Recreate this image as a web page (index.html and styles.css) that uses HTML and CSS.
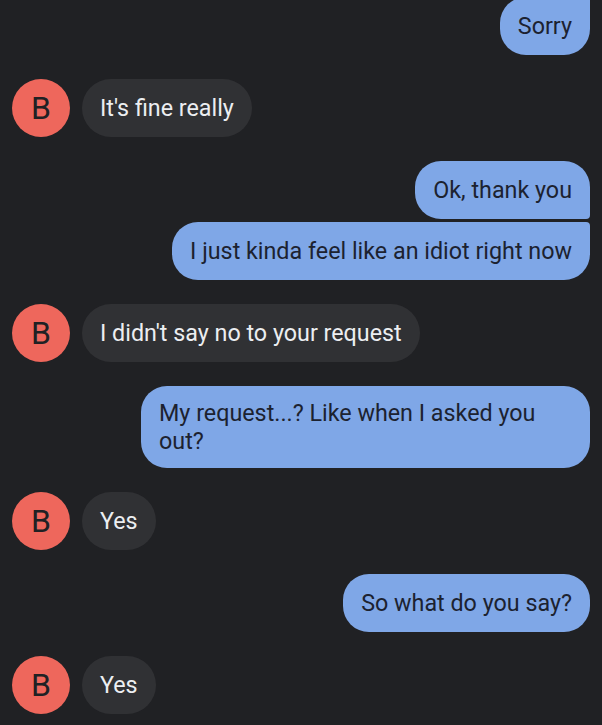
FILE: index.html
```html
<!doctype html>
<html lang="en">
<head>
    <meta charset="utf-8">
    <title>Messages</title>
    <link rel="stylesheet" href="styles.css">
</head>
<body>
<div class="chat">
    <div class="group sent">
        <div class="bubble first-cut">Sorry</div>
    </div>

    <div class="group received">
        <div class="avatar">B</div>
        <div class="bubble">It's fine really</div>
    </div>

    <div class="group sent">
        <div class="bubble top">Ok, thank you</div>
        <div class="bubble bottom">I just kinda feel like an idiot right now</div>
    </div>

    <div class="group received">
        <div class="avatar">B</div>
        <div class="bubble">I didn't say no to your request</div>
    </div>

    <div class="group sent">
        <div class="bubble">My request...? Like when I asked you out?</div>
    </div>

    <div class="group received">
        <div class="avatar">B</div>
        <div class="bubble">Yes</div>
    </div>

    <div class="group sent">
        <div class="bubble">So what do you say?</div>
    </div>

    <div class="group received">
        <div class="avatar">B</div>
        <div class="bubble">Yes</div>
    </div>
</div>
</body>
</html>
```

FILE: styles.css
```css
html, body {
    margin: 0;
    background-color: #202124;
}
body {
    font-family: Roboto, "Noto Sans", Arial, sans-serif;
    overflow: hidden;
    height: 725px;
}
.chat {
    display: flex;
    flex-direction: column;
    gap: 24px;
    padding: 0 12px 0 12px;
    margin-top: -3px;
}
.group {
    display: flex;
}
.group.sent {
    flex-direction: column;
    align-items: flex-end;
    gap: 3px;
}
.group.received {
    align-items: center;
    gap: 12px;
}
.bubble {
    box-sizing: border-box;
    min-height: 58px;
    max-width: 449px;
    padding: 13px 18px;
    font-size: 23.3px;
    line-height: 28px;
    display: flex;
    align-items: center;
    border-radius: 29px;
}
.sent .bubble {
    background-color: #7fa7e7;
    color: #1c2230;
    border-radius: 26px;
}
.sent .bubble.first-cut {
    border-top-right-radius: 4px;
}
.sent .bubble.top {
    border-bottom-right-radius: 4px;
}
.sent .bubble.bottom {
    border-top-right-radius: 4px;
}
.received .bubble {
    background-color: #303134;
    color: #eceef1;
}
.avatar {
    width: 58px;
    height: 58px;
    flex-shrink: 0;
    border-radius: 50%;
    background-color: #ee675c;
    color: #202124;
    font-size: 32px;
    display: flex;
    align-items: center;
    justify-content: center;
}
```
